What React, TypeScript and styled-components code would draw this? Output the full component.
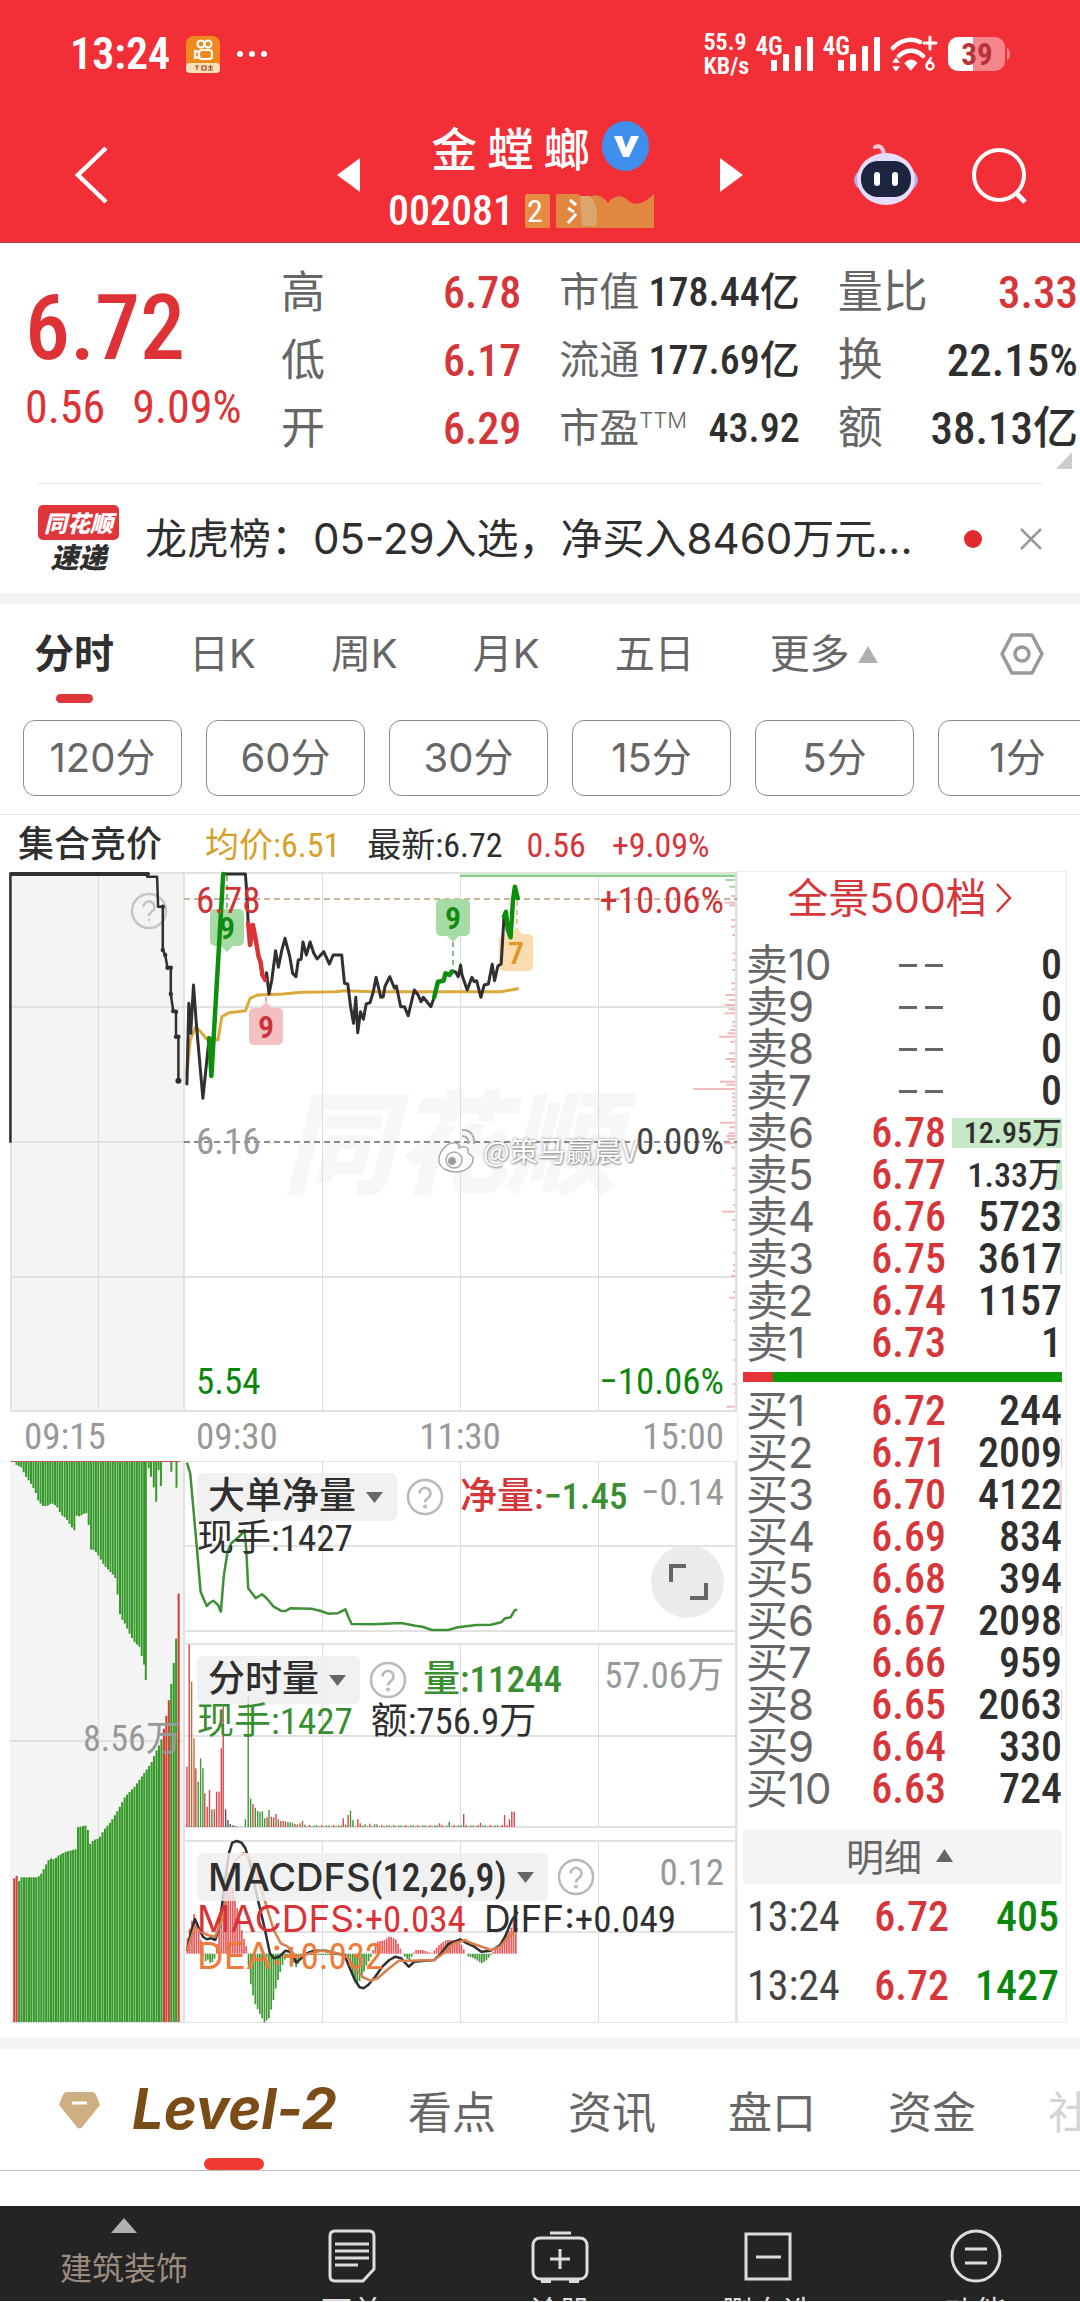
import React from "react";
import styled, { createGlobalStyle } from "styled-components";

const CJK = '"Noto Sans CJK SC", sans-serif';
const TEXT = `Inter, ${CJK}`;
const NUM = `"Roboto Condensed", ${CJK}`;
const RED = "#d6363a";
const GREEN = "#0c860c";
const INK = "#2f2f2f";
const GREY = "#666";
const MUTED = "#999";

const Global = createGlobalStyle`
  * { box-sizing: border-box; }
  body { margin: 0; background: #fff; font-family: ${TEXT}; color: ${INK}; }
  button { font: inherit; color: inherit; background: none; border: 0; padding: 0; margin: 0; white-space: nowrap; }
  a { color: inherit; text-decoration: none; }
  svg { display: block; flex: none; }
`;

const Page = styled.div`
  overflow: hidden;
  background: #fff;
`;
const Band = styled.div<{ h: number }>`
  height: ${p => p.h}px;
  background: #f4f4f4;
`;

/* ---------- header ---------- */
const Header = styled.header`
  background: #f22f37;
  color: #fff;
  border-bottom: 1px solid #b8444a;
`;
const StatusBar = styled.div`
  display: flex;
  align-items: center;
  height: 108px;
  padding: 0 69px 0 70px;
  gap: 16px;
`;
const Clock = styled.span`
  font: 600 44px/44px ${NUM};
`;
const Signals = styled.div`
  display: flex;
  align-items: center;
  gap: 10px;
  margin-left: auto;
`;
const Speed = styled.span`
  font: 600 24px/24px ${NUM};
  width: 46px;
  margin-right: -4px;
`;
const Cell = styled.span`
  display: flex;
  align-items: flex-start;
  font: 600 25px/20px ${NUM};
  & > svg { margin-left: -12px; }
`;
const NavBar = styled.div`
  display: grid;
  grid-template-columns: 1fr 407px 1fr;
  align-items: center;
  height: 134px;
  padding: 0 53px 0 75px;
`;
const Switcher = styled.div`
  display: flex;
  align-items: center;
  justify-content: space-between;
  margin-left: -11px;
  margin-right: 11px;
`;
const Title = styled.div`
  display: flex;
  flex-direction: column;
  align-items: center;
  gap: 18px;
`;
const NameRow = styled.h1`
  display: flex;
  align-items: center;
  gap: 12px;
  margin: 0;
  font: 500 46px/54px ${CJK};
  white-space: nowrap;
`;
const CodeRow = styled.div`
  display: flex;
  align-items: center;
  gap: 6px;
  padding-right: 38px;
  font: 500 42px/40px ${NUM};
`;
const Code = styled.span`
  margin-right: 5px;
`;
const Tag = styled.span`
  display: flex;
  align-items: center;
  height: 34px;
  padding: 0 7px 0 2px;
  border-radius: 2px;
  background: #e58c42;
  font: 400 32px/34px ${NUM};
`;
const NavRight = styled.div`
  display: flex;
  align-items: center;
  justify-content: flex-end;
  gap: 52px;
`;

/* ---------- quote ---------- */
const Quote = styled.section`
  display: flex;
  padding: 16px 2px 20px 25px;
  position: relative;
`;
const PriceBlock = styled.div`
  flex: 0 0 256px;
  color: #de3236;
  padding-top: 25px;
`;
const BigPrice = styled.div`
  font: 500 90px/90px ${NUM};
`;
const Change = styled.div`
  display: flex;
  gap: 27px;
  margin-top: 9px;
  font: 400 46px/48px ${NUM};
`;
const Stats = styled.div`
  flex: 1;
  display: grid;
  grid-template-columns: repeat(3, 1fr);
  column-gap: 38px;
`;
const Stat = styled.div<{ size: number; up?: boolean }>`
  display: flex;
  justify-content: space-between;
  height: 68px;
  font: 500 ${p => p.size}px/68px ${NUM};
  color: ${p => (p.up ? RED : INK)};
  white-space: nowrap;
`;
const StatName = styled.span`
  font-weight: 400;
  color: ${GREY};
`;
const Sup = styled.sup`
  font: 300 22px/22px ${TEXT};
  vertical-align: 14px;
`;
const Corner = styled.span`
  position: absolute;
  right: 8px;
  bottom: 14px;
  border-left: 16px solid transparent;
  border-bottom: 17px solid #ccc;
`;
const News = styled.section`
  display: flex;
  align-items: center;
  height: 110px;
  margin: 0 38px;
  border-top: 1px solid #e4e4e4;
`;
const NewsLogo = styled.div`
  flex: none;
  width: 81px;
  margin-right: 26px;
  font: italic 900 28px/32px ${CJK};
  text-align: center;
`;
const NewsLogoTop = styled.div`
  background: #e0353a;
  border-radius: 5px;
  color: #fff;
  font-size: 23px;
  line-height: 35px;
`;
const Headline = styled.a`
  font: 400 42px/60px ${TEXT};
  white-space: nowrap;
`;
const Dot = styled.span`
  flex: none;
  width: 18px;
  height: 18px;
  border-radius: 50%;
  background: #e3292d;
  margin: 0 38px 0 auto;
`;

/* ---------- period tabs ---------- */
const Tabs = styled.nav`
  display: flex;
  align-items: flex-start;
  gap: 75px;
  padding: 20px 36px 0 34px;
  height: 116px;
  font: 400 40px/60px ${TEXT};
  color: ${GREY};
`;
const Tab = styled.button<{ on?: boolean }>`
  display: flex;
  flex-direction: column;
  align-items: center;
  font-weight: ${p => (p.on ? 700 : 400)};
  color: ${p => (p.on ? INK : GREY)};
  &::after {
    content: "";
    width: 37px;
    height: 9px;
    margin-top: 10px;
    border-radius: 5px;
    background: ${p => (p.on ? "#e0353a" : "transparent")};
  }
`;
const More = styled.span`
  display: flex;
  align-items: center;
  gap: 8px;
`;
const Push = styled.button`
  margin-left: auto;
  padding-top: 8px;
`;
const Minutes = styled.div`
  display: flex;
  gap: 24px;
  padding: 0 23px 18px;
  overflow: hidden;
  border-bottom: 1px solid #e2e2e2;
`;
const Minute = styled.button`
  flex: 0 0 159px;
  height: 76px;
  border: 1px solid #8c8c8c;
  border-radius: 12px;
  font: 400 40px/74px ${TEXT};
  color: ${GREY};
`;
const Info = styled.div`
  display: flex;
  align-items: center;
  height: 56px;
  padding: 4px 18px 0;
  font: 400 34px/44px ${NUM};
  white-space: nowrap;
`;
const InfoItem = styled.span<{ c: string; gap: number; bold?: boolean }>`
  color: ${p => p.c};
  margin-right: ${p => p.gap}px;
  font-size: ${p => (p.bold ? 36 : 34)}px;
  font-weight: ${p => (p.bold ? 500 : 400)};
`;

/* ---------- chart ---------- */
const Board = styled.div`
  display: flex;
  padding: 0 13px 14px 0;
`;
const ChartArea = styled.section`
  flex: 1;
  min-width: 0;
  position: relative;
`;
const ChartSvg = styled.svg`
  width: 100%;
  height: 1152px;
`;
const Overlay = styled.div`
  position: absolute;
  inset: 0;
  display: grid;
  grid-template-rows: 541px 49px 183px 197px 182px;
  font: 400 37px/36px ${NUM};
  white-space: nowrap;
`;
const PricePane = styled.div`
  display: flex;
  flex-direction: column;
  justify-content: space-between;
  padding: 12px 13px 12px 196px;
`;
const Axis = styled.div`
  display: flex;
  align-items: center;
  padding: 0 13px 0 24px;
  color: ${MUTED};
  background: #fff;
`;
const AxisMain = styled.div`
  flex: 1;
  display: flex;
  justify-content: space-between;
`;
const AxisStart = styled.span`
  flex: 0 0 172px;
`;
const Between = styled.div<{ c?: string }>`
  display: flex;
  justify-content: space-between;
  color: ${p => p.c ?? INK};
`;
const Pane = styled.div`
  padding: 12px 13px 0 197px;
`;
const PaneHead = styled.div`
  display: flex;
  align-items: center;
  height: 48px;
  gap: 9px;
`;
const Pill = styled.button`
  display: flex;
  align-items: center;
  gap: 10px;
  height: 48px;
  padding: 0 14px 0 11px;
  border-radius: 6px;
  background: rgba(238, 238, 238, 0.82);
  font-weight: 500;
`;
const Latin = styled.span`
  font-family: Inter, sans-serif;
`;
const Params = styled.span`
  font-size: 38px;
`;
const Tone = styled.span<{ c: string }>`
  color: ${p => p.c};
`;
const Scale = styled.span`
  margin: 0 0 8px auto;
  color: ${MUTED};
`;
const PaneText = styled.div`
  display: flex;
  gap: 18px;
`;
const HeadText = styled.span`
  margin-left: 7px;
  font-weight: 500;
`;
const Expand = styled.button`
  position: absolute;
  right: 13px;
  top: 674px;
  width: 73px;
  height: 73px;
  border-radius: 50%;
  background: #ebebeb;
  display: grid;
  place-items: center;
`;
const AuctionVolume = styled.span`
  position: absolute;
  left: 83px;
  top: 850px;
  font: 400 36px/36px ${NUM};
  color: ${MUTED};
`;
const Credit = styled.div`
  position: absolute;
  left: 437px;
  top: 255px;
  display: flex;
  align-items: center;
  gap: 6px;
  font: 400 28px/48px ${CJK};
  color: #fff;
  text-shadow: 0 0 3px #888, 1px 1px 2px #999;
`;

/* ---------- order book ---------- */
const Book = styled.aside`
  flex: 0 0 330px;
  border: 1px solid #ececec;
  padding: 0 4px 0 5px;
`;
const BookTitle = styled.a`
  display: flex;
  align-items: center;
  justify-content: center;
  gap: 8px;
  height: 52px;
  margin-bottom: 20px;
  padding-right: 6px;
  font: 400 41px/52px ${TEXT};
  color: ${RED};
`;
const Ladder = styled.table`
  width: 100%;
  border-collapse: collapse;
  table-layout: fixed;
  font: 500 42px/42px ${NUM};
  td, th { padding: 0; height: 42px; text-align: right; white-space: nowrap; }
`;
const Level = styled.th`
  width: 100px;
  font: 400 42px/42px ${TEXT};
  color: ${GREY};
  && { text-align: left; padding-left: 3px; }
`;
const Price = styled.td<{ none?: boolean }>`
  width: 103px;
  color: ${p => (p.none ? GREY : RED)};
`;
const Qty = styled.td<{ depth: number; tint: string; size: number }>`
  font-size: ${p => p.size}px;
  background: linear-gradient(${p => p.tint}, ${p => p.tint}) right 0 top 6px / ${p => p.depth}px 30px no-repeat;
`;
const Dash = styled.span`
  display: inline-block;
  width: 18px;
  height: 3px;
  margin: 0 3px 12px 5px;
  background: ${GREY};
`;
const Ratio = styled.div`
  height: 10px;
  margin: 8px 0;
  background: linear-gradient(90deg, #e6333a 30px, #0a9a0a 30px);
`;
const DetailHead = styled.button`
  display: flex;
  align-items: center;
  justify-content: center;
  gap: 14px;
  width: 100%;
  height: 54px;
  margin-top: 20px;
  padding: 0 6px 4px 0;
  background: #f4f4f4;
  font: 400 38px/50px ${CJK};
  color: ${GREY};
`;
const Trade = styled.div`
  display: grid;
  grid-template-columns: 103px 99px 1fr;
  height: 69px;
  padding: 0 3px 0 4px;
  font: 400 42px/66px ${NUM};
  color: #444;
  text-align: right;
  & > :first-child { text-align: left; }
`;
const TradePrice = styled.span`
  font-weight: 500;
  color: ${RED};
`;
const TradeQty = styled.span`
  font-weight: 500;
  color: ${GREEN};
`;

/* ---------- bottom ---------- */
const SubTabs = styled.nav`
  display: flex;
  height: 122px;
  padding-left: 59px;
  border-bottom: 1px solid #bdbdbd;
  overflow: hidden;
  font: 400 44px/120px ${CJK};
  color: ${GREY};
`;
const LevelTab = styled.button`
  display: grid;
  grid-template-columns: 73px 203px;
  margin-right: 73px;
  text-align: left;
`;
const LevelText = styled.span`
  position: relative;
  font: italic 700 56px/120px Inter, sans-serif;
  color: #7a4c17;
  &::after {
    content: "";
    position: absolute;
    left: 72px;
    bottom: 0;
    width: 60px;
    height: 12px;
    border-radius: 6px;
    background: #ef3b32;
  }
`;
const Gem = styled.svg`
  align-self: center;
`;
const SubTab = styled.button<{ faded?: boolean }>`
  margin-right: 72px;
  color: ${p => (p.faded ? "#d4d4d4" : GREY)};
`;
const Dock = styled.nav`
  display: grid;
  grid-template-columns: 248px repeat(4, 1fr);
  height: 95px;
  margin-top: 35px;
  overflow: hidden;
  background: #242424;
  color: #ddd;
`;
const DockItem = styled.button<{ first?: boolean }>`
  display: flex;
  flex-direction: column;
  align-items: center;
  gap: ${p => (p.first ? 9 : 3)}px;
  padding-top: ${p => (p.first ? 12 : 23)}px;
  font: 400 ${p => (p.first ? 32 : 31)}px/48px ${CJK};
  color: ${p => (p.first ? "#9c8b7f" : "#ddd")};
`;

/* ---------- data ---------- */
type P = [number, number];
const SX = 1 / 2.119;
const TOP_PRICE = -11;
const TOP_NET = 579;
const TOP_VOL = 869;
const px = (x: number) => Math.round(x * SX * 10) / 10;
const py = (y: number, top: number) => Math.round((y / 3 + top) * 10) / 10;
const path = (d: P[], top: number) => "M" + d.map(([x, y]) => `${px(x)} ${py(y, top)}`).join("L");

const auction: P[] = [[22,845],[22,42],[310,42],[312,50],[333,50],[335,140],[345,140],[345,270],[350,285],[355,323],[362,323],[362,402],[367,453],[373,455],[373,530],[378,530],[378,662]];
const priceBlack: P[][] = [
  [[396,672],[400,430],[404,520],[410,375],[416,490],[430,715],[443,535]],
  [[473,42],[520,42],[523,100],[526,190]],
  [[562,360],[565,338],[570,402],[576,360],[584,272],[590,322],[597,272],[604,235],[614,290],[620,340],[627,350],[632,300],[638,298],[642,246],[649,285],[657,246],[665,280],[672,297],[686,275],[698,312],[706,285],[724,285],[730,370],[737,372],[743,440],[749,490],[754,412],[758,518],[764,455],[770,478],[776,432],[784,428],[791,395],[797,352],[807,412],[812,410],[816,378],[826,350],[836,385],[840,378],[849,440],[857,440],[865,467],[878,390],[886,405],[892,425],[897,412],[913,440],[920,412]],
  [[957,335],[965,335],[971,350],[976,315],[979,345],[990,390],[1000,352],[1005,365],[1010,362],[1019,412],[1026,375],[1035,372],[1043,313],[1048,362],[1055,318],[1062,312],[1068,170]],
];
const priceGreen: P[][] = [
  [[443,535],[448,648],[473,42]],
  [[920,412],[928,365],[940,362],[944,340],[953,345],[957,335]],
  [[1068,170],[1072,155],[1076,210],[1082,232],[1087,120],[1091,80],[1097,115]],
];
const priceRed: P[] = [[526,190],[530,255],[536,195],[542,240],[548,290],[552,305],[556,345],[562,360]];
const average: P[] = [[396,640],[403,540],[415,500],[425,515],[440,540],[450,535],[462,540],[470,470],[485,458],[520,452],[530,415],[545,405],[600,402],[640,397],[710,395],[730,392],[790,395],[1062,395],[1097,386]];
const profile: P[] = [[60,20],[80,12],[108,8],[128,22],[136,12],[180,8],[200,8],[225,6],[280,5],[300,5],[330,6],[370,8],[388,7],[405,20],[420,12],[435,22],[448,14],[460,22],[485,6],[498,6],[510,10],[520,16],[530,34],[545,10],[580,12],[597,20],[605,10],[620,8],[650,6],[665,32],[674,18],[687,88],[700,6],[712,6],[724,5],[738,6],[750,5],[765,5],[788,32],[802,12],[820,14],[828,18],[837,16],[850,24],[862,8],[925,7],[945,3],[990,4],[1035,4],[1055,28],[1080,6],[1110,3],[1178,4],[1215,4],[1232,4],[1248,8],[1295,4],[1313,12],[1350,4],[1385,3],[1440,3],[1500,3],[1572,5],[1600,2],[1640,18]];

const netLine: P[] = [[396,38],[403,70],[410,180],[417,290],[425,425],[438,468],[445,458],[452,452],[462,465],[468,485],[474,380],[482,305],[490,280],[505,262],[512,252],[518,240],[522,300],[526,415],[542,445],[555,433],[565,445],[580,470],[595,482],[605,483],[615,475],[660,476],[680,483],[695,491],[715,490],[732,478],[738,500],[745,522],[790,523],[850,519],[880,527],[895,530],[915,540],[950,540],[970,532],[1010,525],[1040,524],[1062,517],[1070,505],[1082,502],[1090,482],[1096,478]];
const sellQueue: P[] = [[35,45],[45,52],[55,80],[65,100],[75,125],[80,150],[90,168],[100,168],[110,160],[120,168],[130,195],[140,205],[150,228],[158,242],[162,197],[170,200],[175,192],[187,188],[190,298],[200,300],[210,320],[220,345],[230,360],[240,375],[246,388],[250,445],[255,500],[265,522],[275,552],[285,577],[295,590],[300,617],[305,640],[309,690],[315,55],[320,80],[326,112],[331,155],[336,60],[341,108],[363,65],[374,113]];
const buyQueue: P[] = [[30,415],[35,407],[41,425],[45,412],[80,412],[88,400],[95,380],[105,355],[115,358],[125,345],[140,335],[160,328],[164,262],[185,255],[189,315],[198,300],[210,295],[220,270],[235,245],[250,210],[265,170],[285,140],[300,110],[320,70],[335,20],[340,10],[350,-51],[357,-114],[362,-159],[368,-231],[374,-315],[379,-456]];

const at = (d: P[], x: number) => {
  const i = d.findIndex(p => p[0] >= x);
  if (i <= 0) return d[i < 0 ? d.length - 1 : 0][1];
  const [x0, y0] = d[i - 1];
  const [x1, y1] = d[i];
  return y0 + ((y1 - y0) * (x - x0)) / (x1 - x0);
};
const steps = (from: number, to: number, by: number) => Array.from({ length: Math.floor((to - from) / by) + 1 }, (_, i) => from + i * by);
const sellBars: P[] = [...steps(35, 309, 5.1).map((x): P => [x, at(sellQueue, x)]), ...sellQueue.filter(p => p[0] >= 309)];
const buyBars: P[] = steps(30, 379.5, 5.2).map((x): P => [x, at(buyQueue, x)]);
const redQueue = (x: number) => x < 38 || (x > 343 && x < 359) || x > 376;

const volume: [number, number, string][] = [
  [396,80,"r"],[401,-287,"r"],[406,-175,"o"],[411,-5,"o"],[415,85,"r"],[420,125,"g"],[425,55,"g"],[430,85,"g"],[434,160,"r"],[439,200,"r"],[444,150,"r"],[449,208,"g"],[454,208,"r"],[459,155,"r"],[464,155,"r"],[469,25,"r"],[473,-100,"r"],[478,208,"k"],[483,240,"k"],[488,252,"k"],[493,256,"k"],[498,258,"k"],[503,260,"k"],[510,260,"k"],[520,238,"g"],[526,-130,"g"],[531,175,"g"],[536,192,"r"],[541,203,"g"],[546,212,"g"],[551,216,"g"],[556,214,"g"],[561,235,"g"],[566,232,"r"],[570,210,"g"],[575,230,"r"],[580,232,"r"],[585,222,"r"],[590,238,"g"],[595,243,"r"],[600,243,"r"],[605,244,"r"],[610,246,"g"],[615,247,"g"],[620,248,"g"],[625,252,"r"],[630,254,"r"],[636,250,"g"],[641,243,"r"],[646,254,"g"],
];
const peaks: P[] = [[730,235],[738,225],[743,212],[748,240],[757,238],[764,250],[931,250],[951,245],[980,222],[1018,248],[1067,225],[1077,238],[1087,215],[1092,232]];
steps(651, 1092, 5.1).forEach((x, i) => {
  const peak = peaks.find(p => Math.abs(p[0] - x) < 2.6);
  const n = (i * i + 3 * i) % 5;
  const y = peak ? peak[1] : 259 - n * (x > 770 && x < 805 ? 2 : 1);
  volume.push([x, y, x > 1060 ? "r" : x > 976 && x < 982 ? "g" : "rgkgr"[n]]);
});
const volColor: Record<string, string> = { r: "#d8474c", o: "#b5703c", g: "#3f9a35", k: "#555" };

const macd: P[] = [[396,600],[400,575],[411,520],[418,560],[428,610],[430,641],[433,672],[438,655],[447,672],[455,655],[458,641],[460,600],[468,520],[475,440],[485,390],[495,455],[505,520],[515,590],[521,610],[524,641],[527,680],[532,740],[540,790],[550,820],[560,848],[570,835],[578,790],[585,740],[595,690],[602,660],[615,645],[627,682],[635,665],[645,645],[735,645],[745,700],[755,730],[765,720],[775,680],[786,650],[790,632],[800,605],[815,600],[826,588],[840,600],[852,638],[858,650],[867,662],[873,648],[880,630],[895,630],[915,640],[930,615],[945,600],[960,600],[975,605],[985,636],[990,648],[1005,655],[1020,670],[1030,662],[1040,645],[1048,630],[1065,600],[1075,580],[1085,560],[1092,510],[1097,530]];
const diff: P[] = [[396,632],[405,575],[413,537],[420,560],[430,590],[438,598],[448,595],[456,600],[465,560],[475,440],[485,340],[492,308],[502,303],[512,308],[520,325],[530,370],[545,470],[560,560],[572,640],[580,655],[592,650],[605,632],[615,635],[628,668],[638,655],[650,640],[665,632],[690,632],[710,640],[730,645],[740,680],[752,720],[762,742],[770,745],[780,735],[795,710],[810,680],[825,660],[838,650],[850,655],[866,680],[878,665],[900,662],[920,660],[935,640],[950,612],[975,598],[990,610],[1005,620],[1020,635],[1040,632],[1060,615],[1070,590],[1085,540],[1097,515]];
const dea: P[] = [[396,632],[413,560],[425,575],[440,585],[456,590],[470,540],[485,420],[500,360],[515,340],[523,343],[535,370],[550,430],[565,500],[580,570],[595,610],[610,620],[628,652],[645,645],[680,632],[710,638],[735,650],[755,690],[770,712],[785,722],[800,715],[820,690],[845,662],[866,662],[920,660],[940,640],[960,612],[985,600],[1000,610],[1040,630],[1060,620],[1075,595],[1097,565]];

const sells: [string, string, string, number, number][] = [
  ["卖10", "", "0", 0, 42], ["卖9", "", "0", 0, 42], ["卖8", "", "0", 0, 42], ["卖7", "", "0", 0, 42],
  ["卖6", "6.78", "12.95万", 110, 30], ["卖5", "6.77", "1.33万", 6, 34], ["卖4", "6.76", "5723", 3, 42],
  ["卖3", "6.75", "3617", 2, 42], ["卖2", "6.74", "1157", 0, 42], ["卖1", "6.73", "1", 0, 42],
];
const buys: [string, string, string, number, number][] = [
  ["买1", "6.72", "244", 0, 42], ["买2", "6.71", "2009", 1, 42], ["买3", "6.70", "4122", 3, 42], ["买4", "6.69", "834", 0, 42],
  ["买5", "6.68", "394", 0, 42], ["买6", "6.67", "2098", 1, 42], ["买7", "6.66", "959", 0, 42], ["买8", "6.65", "2063", 1, 42],
  ["买9", "6.64", "330", 0, 42], ["买10", "6.63", "724", 0, 42],
];

/* ---------- small drawings ---------- */
const Tri = ({ w, h, c, down }: { w: number; h: number; c: string; down?: boolean }) => (
  <svg width={w} height={h}><path d={down ? `M0 0H${w}L${w / 2} ${h}Z` : `M0 ${h}H${w}L${w / 2} 0Z`} fill={c} /></svg>
);
const Bars = () => (
  <svg width="42" height="34" viewBox="0 0 42 34" fill="#fff">
    <rect x="0" y="23" width="6" height="11" rx="1" /><rect x="12" y="17" width="6" height="17" rx="1" />
    <rect x="24" y="9" width="6" height="25" rx="1" /><rect x="36" y="0" width="6" height="34" rx="1" />
  </svg>
);
const Help = () => (
  <svg width="38" height="38" viewBox="0 0 38 38" fill="none" stroke="#b9b9b9" strokeWidth="2.5">
    <circle cx="19" cy="19" r="17" />
    <path d="M13.500 15.500a5.500 5.500 0 1 1 8.500 4.500c-2.200 1.400-3 2.300-3 4.500" /><circle cx="19" cy="28.500" r=".8" />
  </svg>
);
const Flag = ({ x, y, n, fill, c, up }: { x: number; y: number; n: string; fill: string; c: string; up?: boolean }) => (
  <g>
    <rect x={x} y={y} width="34" height="37" rx="5" fill={fill} />
    <path d={up ? `M${x + 11} ${y}l6-6 6 6z` : `M${x + 11} ${y + 37}l6 6 6-6z`} fill={fill} />
    <text x={x + 17} y={y + 30} textAnchor="middle" fill={c} fontFamily='"Roboto Condensed", sans-serif' fontWeight="600" fontSize="32">{n}</text>
  </g>
);

const Chart = () => (
  <ChartSvg viewBox="0 0 737 1152" preserveAspectRatio="none" fill="none" aria-hidden="true">
    <rect x="10" y="2" width="174" height="1150" fill="#f4f4f4" />
    <g fill="#f7f7f7" fontFamily={CJK} fontWeight="900" fontStyle="italic" fontSize="112">
      <text x="282" y="314">同花顺</text>
    </g>
    <path stroke="#e2e2e2" strokeWidth="2" d="M10 2H737M10 136H737M10 271H184M10 406H737M10 540H737M11 2V540M184 2V1152M10 590H737M184 675H737M184 760H737M10 870H184M184 773H737M184 865H737M184 956H737M184 970H737M184 1061H737M10 1152H737M736 2V1152" />
    <path stroke="#dcdcdc" d="M98.500 2V540M98.500 590V1152M322.500 2V540M460.500 2V540M598.500 2V540M322.500 590V760M460.500 590V760M598.500 590V760M322.500 773V956M460.500 773V956M598.500 773V956M322.500 970V1152M460.500 970V1152M598.500 970V1152" />
    <rect x="460" y="2" width="275" height="3" fill="#c9eec9" />
    <path stroke="#8dc98d" strokeWidth="2" d="M460 5H735" />
    <path stroke="#b3a077" strokeWidth="1.500" strokeDasharray="6 4" d="M184 28H737" />
    <path stroke="#666" strokeWidth="1.500" strokeDasharray="6 4" d="M184 271H737" />
    {profile.map(([y, w], i) => (
      <rect key={i} x={735 - w * SX} y={py(y, TOP_PRICE) - 1} width={w * SX} height="2" fill={i < 2 ? "#a9d6a9" : "#f0b9bc"} />
    ))}
    <g strokeWidth="1.500" strokeDasharray="5 4">
      <path stroke="#5aa85a" d="M227 5V42M453 71V104" /><path stroke="#e08a8e" d="M266 126V134" /><path stroke="#e6b56a" d="M517 30V62" />
    </g>
    <Flag x={210} y={38} n="9" fill="#a6dba6" c="#108a10" />
    <Flag x={436} y={28} n="9" fill="#a6dba6" c="#108a10" />
    <Flag x={249} y={137} n="9" fill="#f4bfc1" c="#c9343a" up />
    <Flag x={499} y={63} n="7" fill="#fbdcae" c="#dd9a2b" up />
    <g transform="translate(131 22)"><circle cx="18" cy="18" r="17" stroke="#c4c4c4" strokeWidth="2.500" /><path d="M12.500 14a5.500 5.500 0 1 1 8.500 4.500c-2.200 1.400-3 2.300-3 4.500M18 26v2" stroke="#c4c4c4" strokeWidth="2.500" /></g>
    <g strokeLinejoin="round" strokeLinecap="round">
      <path d={path(auction, TOP_PRICE)} stroke="#303030" strokeWidth="2.500" />
      <path d="M11 3H148" stroke="#303030" strokeWidth="4" />
      {auction.slice(6, 16).map(([x, y], i) => <circle key={i} cx={px(x)} cy={py(y, TOP_PRICE)} r="2.200" fill="#303030" />)}
      <circle cx={px(378)} cy={py(662, TOP_PRICE)} r="3" fill="#303030" />
      <path d={path(average, TOP_PRICE)} stroke="#dba83c" strokeWidth="3" />
      {priceBlack.map((d, i) => <path key={i} d={path(d, TOP_PRICE)} stroke="#303030" strokeWidth="3" />)}
      <path d={path(priceRed, TOP_PRICE)} stroke="#d93338" strokeWidth="4.500" />
      {priceGreen.map((d, i) => <path key={i} d={path(d, TOP_PRICE)} stroke="#0d8f0d" strokeWidth="4.500" />)}
    </g>

    {sellBars.map(([x, y], i) => <rect key={i} x={px(x) - 1} y="590" width="2" height={py(y, TOP_NET) - 590} fill="#369a2a" />)}
    <path stroke="#c2574f" d="M11 590.500H180" />
    {buyBars.map(([x, y], i) => <rect key={i} x={px(x) - 1} y={py(y, TOP_VOL)} width="2.100" height={1151 - py(y, TOP_VOL)} fill={redQueue(x) ? "#cf4436" : "#369a2a"} />)}
    <path d={path(netLine, TOP_NET)} stroke="#3f8f38" strokeWidth="2.500" strokeLinejoin="round" />

    {volume.map(([x, y, c], i) => <rect key={i} x={px(x) - 0.7} y={py(y, TOP_VOL)} width="1.400" height={956 - py(y, TOP_VOL)} fill={volColor[c]} />)}
    {steps(397, 1096, 4.8).map(x => {
      const y = py(at(macd, x), TOP_VOL);
      const zero = py(641, TOP_VOL);
      return <rect key={x} x={px(x) - 0.8} y={Math.min(y, zero)} width="1.700" height={Math.abs(y - zero)} fill={y < zero ? "#ea5a5e" : "#3f9a35"} />;
    })}
    <path d={path(diff, TOP_VOL)} stroke="#303030" strokeWidth="2.500" strokeLinejoin="round" />
    <path d={path(dea, TOP_VOL)} stroke="#d8804f" strokeWidth="2.500" strokeLinejoin="round" />
  </ChartSvg>
);

const LadderTable = ({ rows, tint, label }: { rows: typeof sells; tint: string; label: string }) => (
  <Ladder aria-label={label}>
    <tbody>
      {rows.map(([name, price, qty, depth, size]) => (
        <tr key={name}>
          <Level scope="row">{name}</Level>
          <Price none={!price}>{price || <><Dash /><Dash /></>}</Price>
          <Qty depth={depth} tint={tint} size={size}>{qty}</Qty>
        </tr>
      ))}
    </tbody>
  </Ladder>
);

export default function App() {
  return (
    <Page>
      <Global />
      <Header>
        <StatusBar>
          <Clock>13:24</Clock>
          <svg width="34" height="37" viewBox="0 0 34 37">
            <rect width="34" height="37" rx="8" fill="#f08a1d" />
            <rect y="27" width="34" height="10" rx="4" fill="#f7dfb8" />
            <g fill="none" stroke="#fff" strokeWidth="2.200"><circle cx="15" cy="8" r="3.500" /><circle cx="22" cy="8" r="3.500" /><rect x="13" y="14" width="13" height="9" rx="3" /><path d="M13 16l-4-1v7l4-1" /></g>
            <path d="M9 30h4M11 30v4M16 30h4v4h-4zM22 31h5M22 34h5M24.500 29v5" stroke="#9c4a20" strokeWidth="1.200" fill="none" />
          </svg>
          <svg width="32" height="8" fill="#fff"><circle cx="4" cy="4" r="3" /><circle cx="16" cy="4" r="3" /><circle cx="28" cy="4" r="3" /></svg>
          <Signals>
            <Speed>55.9 KB/s</Speed>
            <Cell>4G<Bars /></Cell>
            <Cell>4G<Bars /></Cell>
            <svg width="48" height="38" viewBox="0 0 48 38" fill="none" stroke="#fff" strokeWidth="4.500" strokeLinecap="round">
              <path d="M3 13C11 4 23 3 30 7M9 21c7-7 17-7 24 0" /><path d="M15 28c4-4 8-4 12 0l-6 7z" fill="#fff" strokeWidth="1" />
              <path d="M40 2v12M34 8h12" strokeWidth="3" /><path d="M3 27l3-4 3 4zM3 32l3 4 3-4z" fill="#fff" strokeWidth="1" />
              <circle cx="40" cy="31" r="3.500" strokeWidth="2.500" /><path d="M41 23l-4 6" strokeWidth="2.500" />
            </svg>
            <svg width="63" height="34" viewBox="0 0 63 34">
              <rect width="57" height="34" rx="10" fill="#f6868b" /><path d="M10 0H25V34H10A10 10 0 0 1 0 24V10A10 10 0 0 1 10 0Z" fill="#fff" />
              <path d="M59 11c4 2 4 10 0 12z" fill="#f6868b" />
              <text x="29" y="28" textAnchor="middle" fontFamily={NUM} fontWeight="700" fontSize="31" fill="#b8323a">39</text>
            </svg>
          </Signals>
        </StatusBar>
        <NavBar>
          <button aria-label="返回">
            <svg width="34" height="58" viewBox="0 0 34 58" fill="none" stroke="#fff" strokeWidth="4.500"><path d="M31 2L3 29 31 56" /></svg>
          </button>
          <Switcher>
            <button aria-label="上一只"><svg width="23" height="34"><path d="M23 0V34L0 17Z" fill="#fff" /></svg></button>
            <Title>
              <NameRow>
                金 螳 螂
                <svg width="47" height="50" viewBox="0 0 47 50"><ellipse cx="23.500" cy="25" rx="23.500" ry="25" fill="#3f8fee" /><path d="M12 15h8l4 12 5-12h8L27 36h-6z" fill="#fff" /></svg>
              </NameRow>
              <CodeRow>
                <Code>002081</Code>
                <Tag>2</Tag>
                <svg width="98" height="34" viewBox="0 0 98 34">
                  <path d="M0 2Q0 0 2 0H22Q30 8 36 2 44-1 52 9 62-4 74 8 84 14 98 0V34H2Q0 34 0 32Z" fill="#e0883f" />
                  <path d="M24 2h10q10 10 6 30H26z" fill="#dba56e" />
                  <path d="M14 6l6 5M12 14l6 4M12 29l8-9" stroke="#fff" strokeWidth="3" />
                </svg>
              </CodeRow>
            </Title>
            <button aria-label="下一只"><svg width="23" height="34"><path d="M0 0V34L23 17Z" fill="#fff" /></svg></button>
          </Switcher>
          <NavRight>
            <button aria-label="助手">
              <svg width="66" height="62" viewBox="0 0 66 62">
                <path d="M22 3q8-3 9 8" stroke="#f7c9d6" strokeWidth="4" fill="none" strokeLinecap="round" />
                <ellipse cx="33" cy="36" rx="32" ry="17" fill="#b8a8ea" /><ellipse cx="33" cy="35" rx="29" ry="26" fill="#e6dcfb" />
                <rect x="8" y="17" width="50" height="36" rx="17" fill="#1d2440" />
                <rect x="21" y="28" width="6" height="14" rx="3" fill="#fff" /><rect x="39" y="28" width="6" height="14" rx="3" fill="#fff" />
              </svg>
            </button>
            <button aria-label="搜索">
              <svg width="56" height="58" viewBox="0 0 56 58" fill="none" stroke="#fff" strokeWidth="4"><circle cx="28" cy="29" r="25" /><path d="M45 47l9 9" strokeWidth="5" /></svg>
            </button>
          </NavRight>
        </NavBar>
      </Header>

      <Quote>
        <PriceBlock>
          <BigPrice>6.72</BigPrice>
          <Change><span>0.56</span><span>9.09%</span></Change>
        </PriceBlock>
        <Stats>
          <div>
            <Stat size={44} up><StatName>高</StatName>6.78</Stat>
            <Stat size={44} up><StatName>低</StatName>6.17</Stat>
            <Stat size={44} up><StatName>开</StatName>6.29</Stat>
          </div>
          <div>
            <Stat size={40}><StatName>市值</StatName>178.44亿</Stat>
            <Stat size={40}><StatName>流通</StatName>177.69亿</Stat>
            <Stat size={40}><StatName>市盈<Sup>TTM</Sup></StatName>43.92</Stat>
          </div>
          <div>
            <Stat size={45} up><StatName>量比</StatName>3.33</Stat>
            <Stat size={45}><StatName>换</StatName>22.15%</Stat>
            <Stat size={45}><StatName>额</StatName>38.13亿</Stat>
          </div>
        </Stats>
        <Corner />
      </Quote>
      <News>
        <NewsLogo><NewsLogoTop>同花顺</NewsLogoTop>速递</NewsLogo>
        <Headline href="#news">龙虎榜：05-29入选，净买入8460万元...</Headline>
        <Dot />
        <button aria-label="关闭"><svg width="22" height="22" stroke="#999" strokeWidth="2.500"><path d="M1 1L21 21M21 1L1 21" /></svg></button>
      </News>
      <Band h={11} />

      <Tabs>
        <Tab on>分时</Tab>
        <Tab>日K</Tab>
        <Tab>周K</Tab>
        <Tab>月K</Tab>
        <Tab>五日</Tab>
        <Tab><More>更多<Tri w={20} h={17} c="#b0b0b0" /></More></Tab>
        <Push aria-label="设置">
          <svg width="44" height="44" viewBox="0 0 44 44" fill="none" stroke="#999" strokeWidth="3.500" strokeLinejoin="round"><path d="M12 3H32L42 22 32 41H12L2 22Z" /><circle cx="22" cy="22" r="7" /></svg>
        </Push>
      </Tabs>
      <Minutes>
        {["120分", "60分", "30分", "15分", "5分", "1分"].map(m => <Minute key={m}>{m}</Minute>)}
      </Minutes>
      <Info>
        <InfoItem c={INK} gap={43} bold>集合竞价</InfoItem>
        <InfoItem c="#d6a02a" gap={27}>均价:6.51</InfoItem>
        <InfoItem c={INK} gap={24}>最新:6.72</InfoItem>
        <InfoItem c={RED} gap={26}>0.56</InfoItem>
        <InfoItem c={RED} gap={0}>+9.09%</InfoItem>
      </Info>

      <Board>
        <ChartArea>
          <Chart />
          <Overlay>
            <PricePane>
              <Between c="#cf3338"><span>6.78</span><span>+10.06%</span></Between>
              <Between c="#444"><Tone c={MUTED}>6.16</Tone><span>0.00%</span></Between>
              <Between c={GREEN}><span>5.54</span><span>−10.06%</span></Between>
            </PricePane>
            <Axis>
              <AxisStart>09:15</AxisStart>
              <AxisMain><span>09:30</span><span>11:30</span><span>15:00</span></AxisMain>
            </Axis>
            <Pane>
              <PaneHead>
                <Pill>大单净量<Tri w={17} h={11} c="#666" down /></Pill>
                <Help />
                <HeadText><Tone c={RED}>净量:</Tone><Tone c="#388e30">−1.45</Tone></HeadText>
                <Scale>−0.14</Scale>
              </PaneHead>
              <PaneText>现手:1427</PaneText>
            </Pane>
            <Pane>
              <PaneHead>
                <Pill>分时量<Tri w={17} h={11} c="#666" down /></Pill>
                <Help />
                <HeadText><Tone c="#388e30">量:11244</Tone></HeadText>
                <Scale>57.06万</Scale>
              </PaneHead>
              <PaneText><Tone c="#388e30">现手:1427</Tone><span>额:756.9万</span></PaneText>
            </Pane>
            <Pane>
              <PaneHead>
                <Pill><Params><Latin>MACDFS</Latin>(12,26,9)</Params><Tri w={17} h={11} c="#666" down /></Pill>
                <Help />
                <Scale>0.12</Scale>
              </PaneHead>
              <PaneText>
                <Tone c="#d93338"><Latin>MACDFS:</Latin>+0.034</Tone>
                <span><Latin>DIFF:</Latin>+0.049</span>
              </PaneText>
              <PaneText><Tone c="#f07a3a"><Latin>DEA:</Latin>+0.032</Tone></PaneText>
            </Pane>
          </Overlay>
          <AuctionVolume>8.56万</AuctionVolume>
          <Credit>
            <svg width="40" height="46" viewBox="0 0 40 46" fill="#fff" stroke="#aaa" strokeWidth="1.500">
              <path d="M15 16C8 17 1 27 2 34c1 8 10 11 17 11 9 0 17-6 17-13 0-4-4-5-5-6 1-5-2-8-9-5 1-4-3-6-7-5z" />
              <circle cx="17" cy="33" r="8" fill="none" /><circle cx="15" cy="34" r="3.500" fill="#999" />
              <path d="M25 3c8-1 13 6 12 14M25 9c5 0 7 3 6 8" fill="none" strokeWidth="2" />
            </svg>
            @策马赢晨V
          </Credit>
          <Expand aria-label="全屏">
            <svg width="40" height="38" viewBox="0 0 40 38" fill="none" stroke="#666" strokeWidth="4"><path d="M3 19V3H18M38 20V35H22" /></svg>
          </Expand>
        </ChartArea>

        <Book>
          <BookTitle href="#depth">全景500档<svg width="17" height="30" viewBox="0 0 17 30" fill="none" stroke={RED} strokeWidth="2.500"><path d="M2 1L15 15 2 29" /></svg></BookTitle>
          <LadderTable rows={sells} tint="#c6e8c6" label="卖盘" />
          <Ratio />
          <LadderTable rows={buys} tint="#f3c9cb" label="买盘" />
          <DetailHead>明细<Tri w={17} h={13} c="#666" /></DetailHead>
          <Trade><span>13:24</span><TradePrice>6.72</TradePrice><TradeQty>405</TradeQty></Trade>
          <Trade><span>13:24</span><TradePrice>6.72</TradePrice><TradeQty>1427</TradeQty></Trade>
        </Book>
      </Board>
      <Band h={12} />

      <SubTabs>
        <LevelTab>
          <Gem width="41" height="38" viewBox="0 0 41 38"><path d="M8 1H33Q36 1 38 6L41 14 24 35Q20.500 40 17 35L0 14 3 6Q5 1 8 1Z" fill="#cfae82" /><path d="M13 12H28" stroke="#fff" strokeWidth="3" /></Gem>
          <LevelText>Level-2</LevelText>
        </LevelTab>
        <SubTab>看点</SubTab>
        <SubTab>资讯</SubTab>
        <SubTab>盘口</SubTab>
        <SubTab>资金</SubTab>
        <SubTab faded>社区</SubTab>
      </SubTabs>
      <Dock>
        <DockItem first><Tri w={26} h={15} c="#b0b0b0" />建筑装饰</DockItem>
        <DockItem>
          <svg width="50" height="54" viewBox="0 0 50 54" fill="none" stroke="#ddd" strokeWidth="3"><path d="M8 2H42Q47 2 47 7V40L36 52H8Q3 52 3 47V7Q3 2 8 2Z" /><path d="M8 15H42M8 22H42M8 29H42M8 36H31" /></svg>
          下单
        </DockItem>
        <DockItem>
          <svg width="58" height="54" viewBox="0 0 58 54" fill="none" stroke="#ddd" strokeWidth="3"><rect x="2" y="9" width="54" height="41" rx="7" /><path d="M19 4H40M29 20V40M19 30H39" /><path d="M10 52h10M38 52h10" strokeWidth="4" /></svg>
          诊股
        </DockItem>
        <DockItem>
          <svg width="48" height="54" viewBox="0 0 48 54" fill="none" stroke="#ddd" strokeWidth="3"><rect x="2" y="5" width="44" height="45" /><path d="M12 28H37" /></svg>
          删自选
        </DockItem>
        <DockItem>
          <svg width="52" height="54" viewBox="0 0 52 54" fill="none" stroke="#ddd" strokeWidth="3"><ellipse cx="26" cy="27" rx="24" ry="25" /><path d="M15 20H37M15 34H37" /></svg>
          功能
        </DockItem>
      </Dock>
    </Page>
  );
}
